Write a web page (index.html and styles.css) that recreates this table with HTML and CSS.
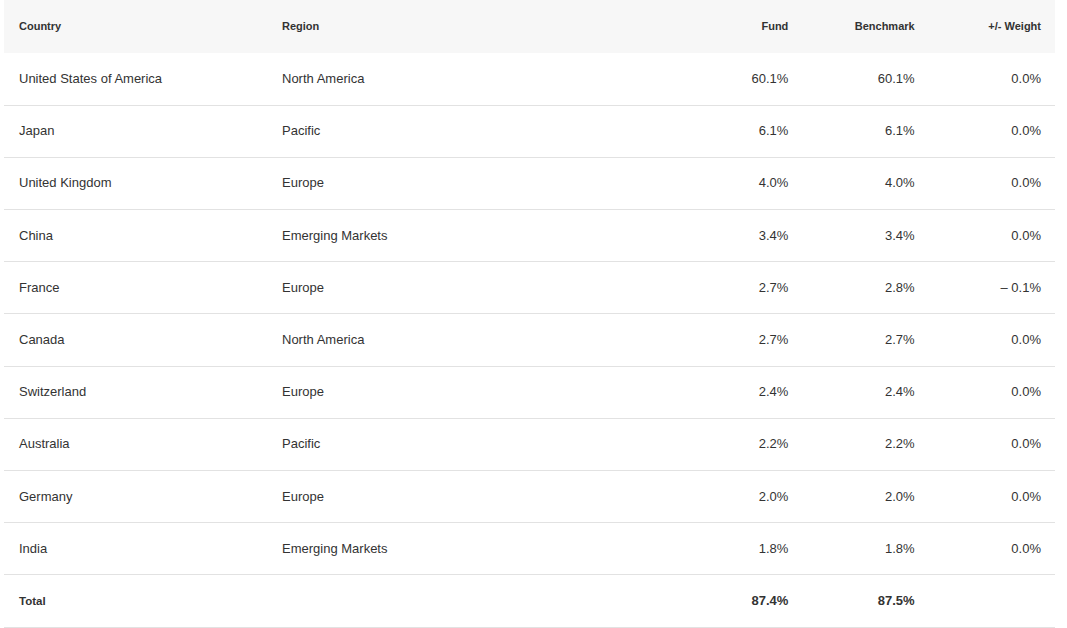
FILE: index.html
```html
<!DOCTYPE html>
<html>
<head>
<meta charset="utf-8">
<link rel="stylesheet" href="styles.css">
</head>
<body>
<table class="alloc">
  <colgroup>
    <col class="c-country"><col class="c-region"><col class="c-num"><col class="c-num"><col class="c-num">
  </colgroup>
  <thead>
    <tr><th>Country</th><th>Region</th><th class="num">Fund</th><th class="num">Benchmark</th><th class="num">+/- Weight</th></tr>
  </thead>
  <tbody>
    <tr><td>United States of America</td><td>North America</td><td class="num">60.1%</td><td class="num">60.1%</td><td class="num">0.0%</td></tr>
    <tr><td>Japan</td><td>Pacific</td><td class="num">6.1%</td><td class="num">6.1%</td><td class="num">0.0%</td></tr>
    <tr><td>United Kingdom</td><td>Europe</td><td class="num">4.0%</td><td class="num">4.0%</td><td class="num">0.0%</td></tr>
    <tr><td>China</td><td>Emerging Markets</td><td class="num">3.4%</td><td class="num">3.4%</td><td class="num">0.0%</td></tr>
    <tr><td>France</td><td>Europe</td><td class="num">2.7%</td><td class="num">2.8%</td><td class="num">– 0.1%</td></tr>
    <tr><td>Canada</td><td>North America</td><td class="num">2.7%</td><td class="num">2.7%</td><td class="num">0.0%</td></tr>
    <tr><td>Switzerland</td><td>Europe</td><td class="num">2.4%</td><td class="num">2.4%</td><td class="num">0.0%</td></tr>
    <tr><td>Australia</td><td>Pacific</td><td class="num">2.2%</td><td class="num">2.2%</td><td class="num">0.0%</td></tr>
    <tr><td>Germany</td><td>Europe</td><td class="num">2.0%</td><td class="num">2.0%</td><td class="num">0.0%</td></tr>
    <tr><td>India</td><td>Emerging Markets</td><td class="num">1.8%</td><td class="num">1.8%</td><td class="num">0.0%</td></tr>
  </tbody>
  <tfoot>
    <tr><th>Total</th><td></td><td class="num strong">87.4%</td><td class="num strong">87.5%</td><td></td></tr>
  </tfoot>
</table>
</body>
</html>
```
FILE: styles.css
```css
html, body {
  margin: 0;
  padding: 0;
  background: #ffffff;
}
body {
  padding: 0 4px;
  font-family: "Liberation Sans", Arial, sans-serif;
  color: #333333;
}
.alloc {
  width: 1051px;
  border-collapse: collapse;
  table-layout: fixed;
}
.c-country { width: 263px; }
.c-region { width: 409px; }
.c-num { width: 126.33px; }
.alloc th, .alloc td {
  height: 52.2px;
  box-sizing: border-box;
  padding: 0 14px 0 15px;
  text-align: left;
  vertical-align: middle;
  font-size: 13px;
  font-weight: 400;
  line-height: 16px;
}
.alloc th {
  font-size: 11px;
  font-weight: 700;
}
.alloc thead th {
  height: 53px;
  padding-bottom: 1px;
  background: #f7f7f7;
}
.alloc tbody td, .alloc tbody th,
.alloc tfoot td, .alloc tfoot th {
  border-bottom: 1px solid #e2e2e2;
}
.alloc tfoot th {
  font-size: 11.5px;
}
.alloc .num {
  text-align: right;
}
.alloc .strong {
  font-weight: 700;
}
```
